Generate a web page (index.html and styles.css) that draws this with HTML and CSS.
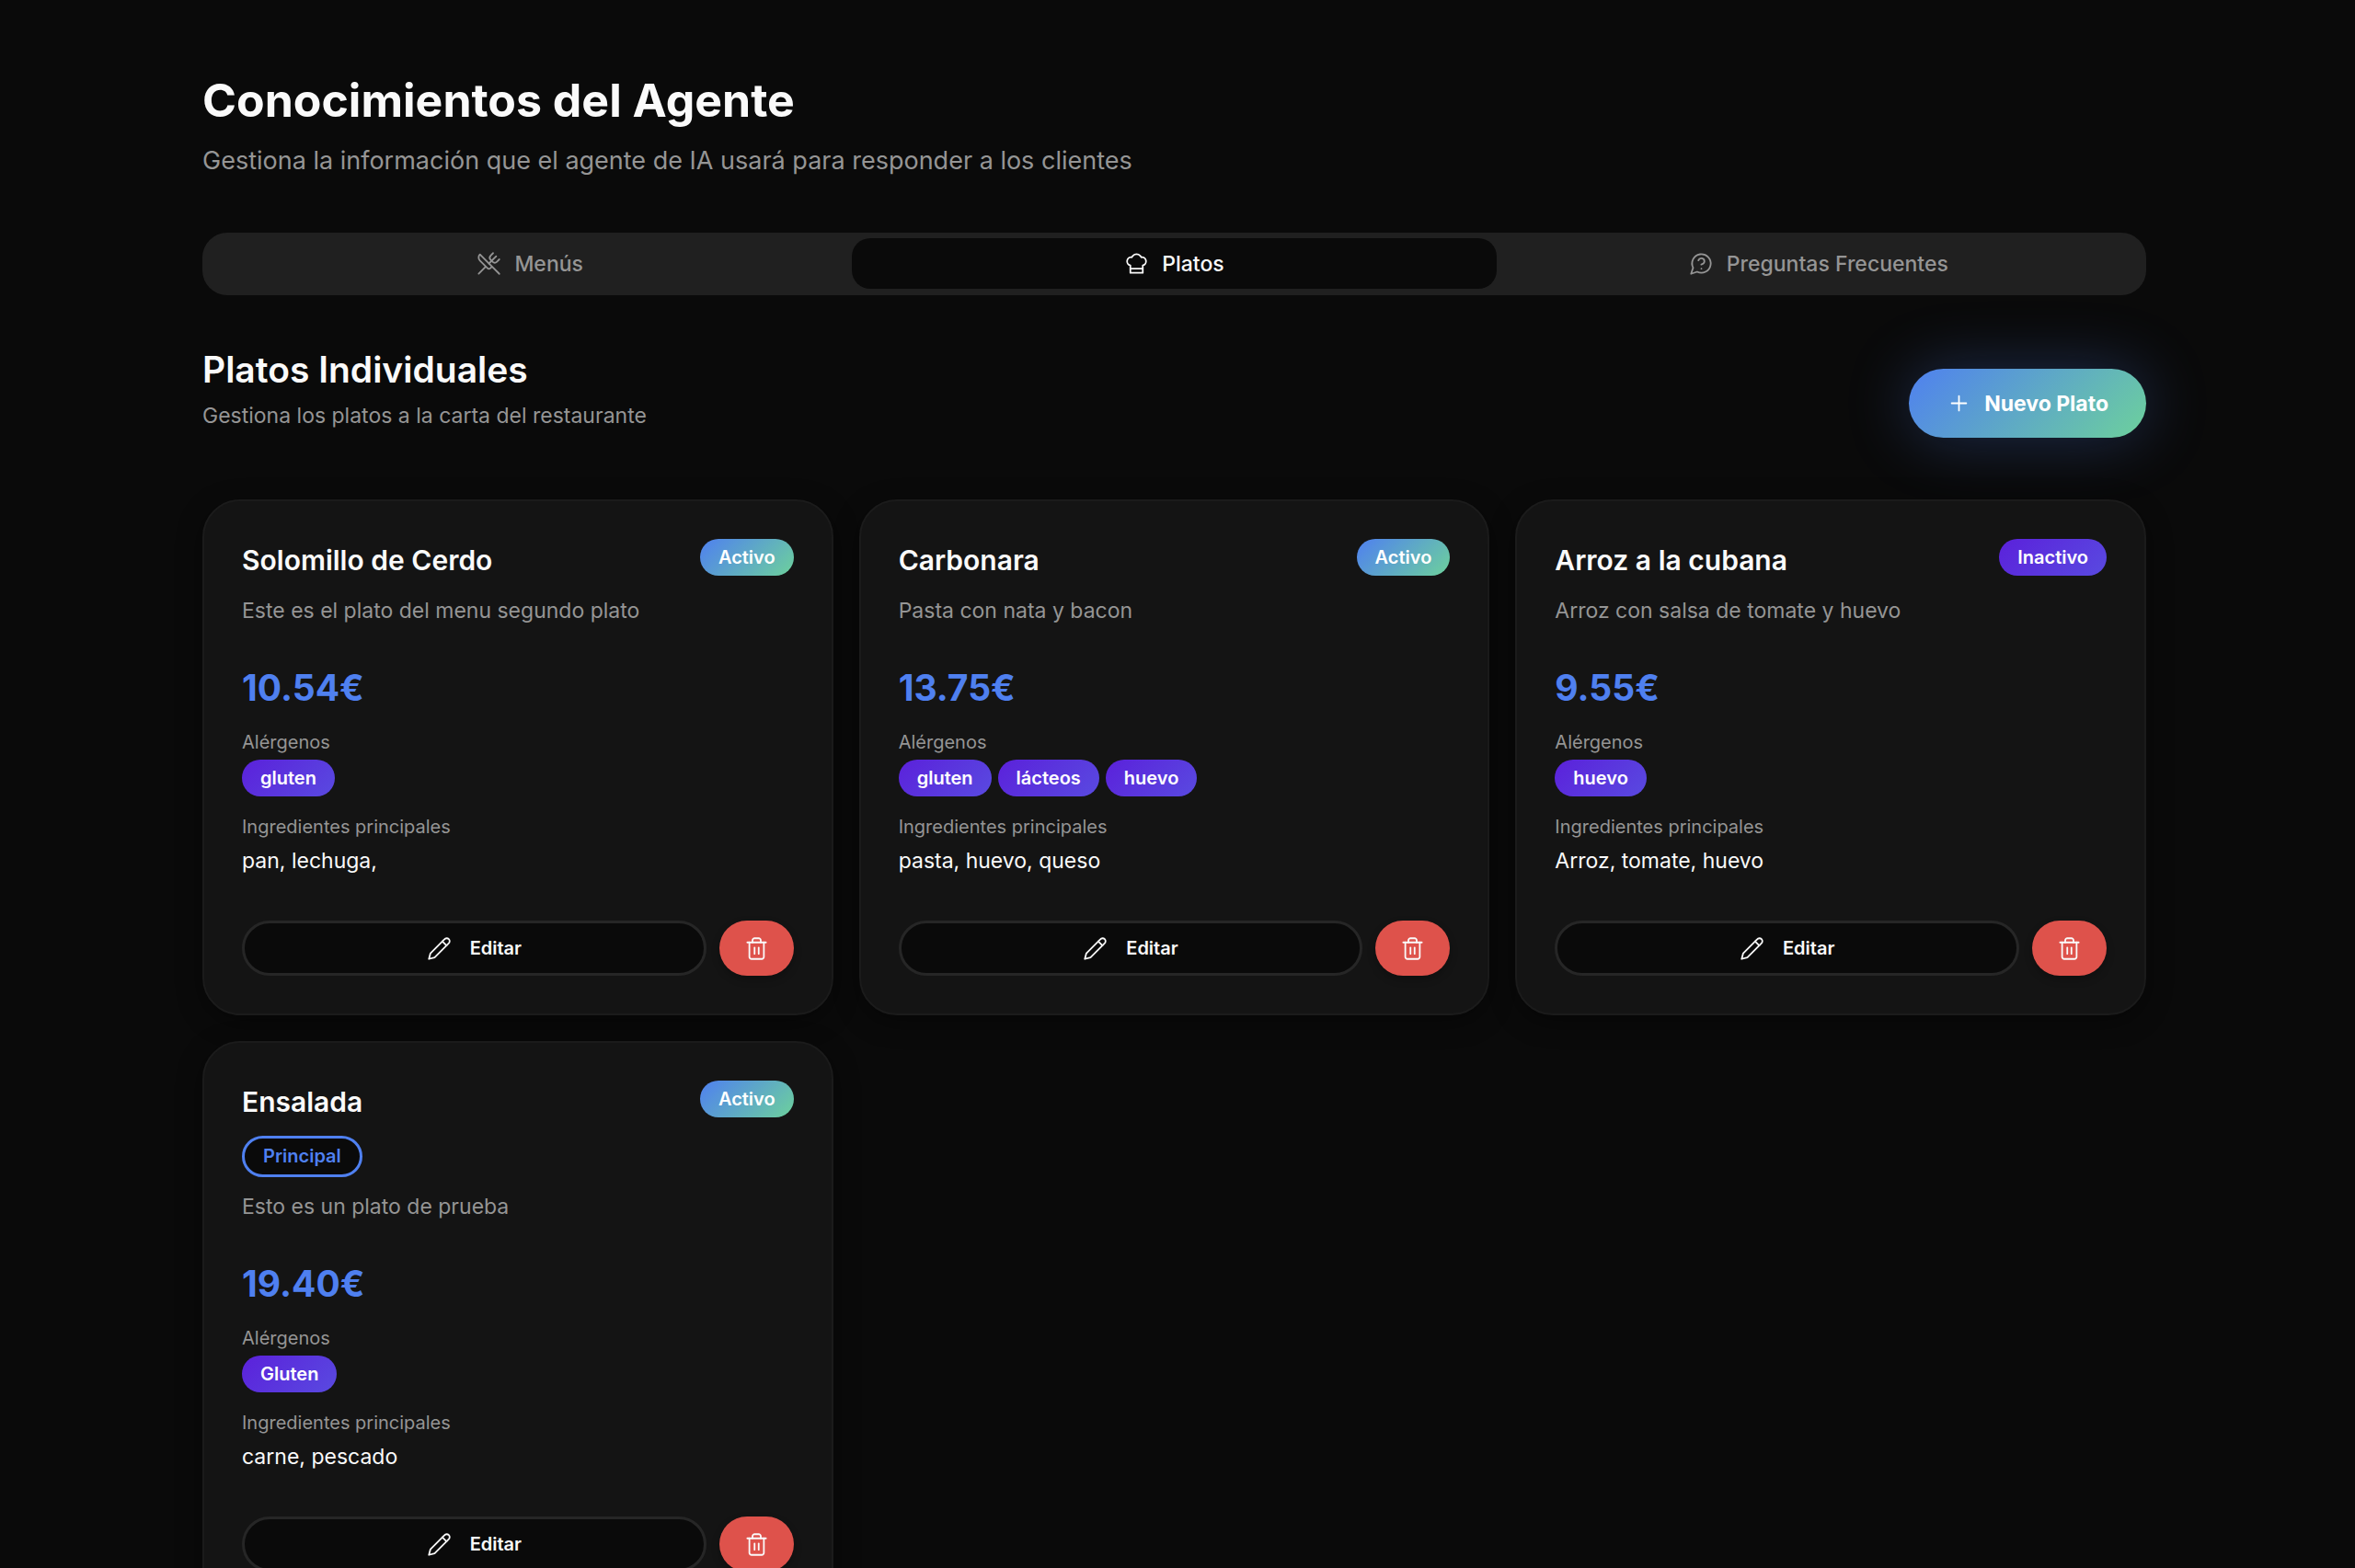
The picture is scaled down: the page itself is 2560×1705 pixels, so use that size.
FILE: index.html
```html
<!DOCTYPE html>
<html lang="es">
<head>
    <meta charset="UTF-8">
    <meta name="viewport" content="width=device-width, initial-scale=1.0">
    <title>Conocimientos del Agente</title>
    <link rel="stylesheet" href="styles.css">
</head>
<body>

    <!-- Iconos compartidos -->
    <svg class="icon-defs" aria-hidden="true">
        <symbol id="icon-utensils" viewBox="0 0 24 24">
            <path d="m16 2-2.3 2.3a3 3 0 0 0 0 4.2l1.8 1.8a3 3 0 0 0 4.2 0L22 8"/>
            <path d="M15 15 3.3 3.3a4.2 4.2 0 0 0 0 6l7.3 7.3c.7.7 2 .7 2.8 0L15 15Zm0 0 7 7"/>
            <path d="m2.1 21.8 6.4-6.3"/>
            <path d="m19 5-7 7"/>
        </symbol>
        <symbol id="icon-chef" viewBox="0 0 24 24">
            <path d="M6 13.87A4 4 0 0 1 7.41 6a5.11 5.11 0 0 1 1.05-1.54 5 5 0 0 1 7.08 0A5.11 5.11 0 0 1 16.59 6 4 4 0 0 1 18 13.87V21H6Z"/>
            <path d="M6 17h12"/>
        </symbol>
        <symbol id="icon-question" viewBox="0 0 24 24">
            <path d="M7.9 20A9 9 0 1 0 4 16.1L2 22Z"/>
            <path d="M9.09 9a3 3 0 0 1 5.83 1c0 2-3 3-3 3"/>
            <path d="M12 17h.01"/>
        </symbol>
        <symbol id="icon-plus" viewBox="0 0 24 24">
            <path d="M5 12h14"/>
            <path d="M12 5v14"/>
        </symbol>
        <symbol id="icon-pencil" viewBox="0 0 24 24">
            <path d="M17 3a2.85 2.83 0 1 1 4 4L7.5 20.5 2 22l1.5-5.5Z"/>
            <path d="m15 5 4 4"/>
        </symbol>
        <symbol id="icon-trash" viewBox="0 0 24 24">
            <path d="M3 6h18"/>
            <path d="M19 6v14c0 1-1 2-2 2H7c-1 0-2-1-2-2V6"/>
            <path d="M8 6V4c0-1 1-2 2-2h4c1 0 2 1 2 2v2"/>
            <path d="M10 11v6"/>
            <path d="M14 11v6"/>
        </symbol>
    </svg>

    <main class="page">
        <header class="page-header">
            <h1>Conocimientos del Agente</h1>
            <p>Gestiona la información que el agente de IA usará para responder a los clientes</p>
        </header>

        <div class="tabs" role="tablist">
            <button class="tab" role="tab" aria-selected="false">
                <svg class="icon"><use href="#icon-utensils"/></svg>
                Menús
            </button>
            <button class="tab active" role="tab" aria-selected="true">
                <svg class="icon"><use href="#icon-chef"/></svg>
                Platos
            </button>
            <button class="tab" role="tab" aria-selected="false">
                <svg class="icon"><use href="#icon-question"/></svg>
                Preguntas Frecuentes
            </button>
        </div>

        <section>
            <div class="section-header">
                <div>
                    <h2>Platos Individuales</h2>
                    <p>Gestiona los platos a la carta del restaurante</p>
                </div>
                <button class="new-button">
                    <svg class="icon"><use href="#icon-plus"/></svg>
                    Nuevo Plato
                </button>
            </div>

            <div class="cards">
                <article class="card">
                    <div class="card-header">
                        <div class="card-info">
                            <h3>Solomillo de Cerdo</h3>
                            <p class="description">Este es el plato del menu segundo plato</p>
                        </div>
                        <span class="badge badge-active">Activo</span>
                    </div>
                    <p class="price">10.54€</p>
                    <div class="detail">
                        <p class="detail-label">Alérgenos</p>
                        <div class="badges">
                            <span class="badge">gluten</span>
                        </div>
                    </div>
                    <div class="detail">
                        <p class="detail-label">Ingredientes principales</p>
                        <p class="ingredients">pan, lechuga,</p>
                    </div>
                    <div class="actions">
                        <button class="edit-button">
                            <svg class="icon"><use href="#icon-pencil"/></svg>
                            Editar
                        </button>
                        <button class="delete-button" aria-label="Eliminar">
                            <svg class="icon"><use href="#icon-trash"/></svg>
                        </button>
                    </div>
                </article>

                <article class="card">
                    <div class="card-header">
                        <div class="card-info">
                            <h3>Carbonara</h3>
                            <p class="description">Pasta con nata y bacon</p>
                        </div>
                        <span class="badge badge-active">Activo</span>
                    </div>
                    <p class="price">13.75€</p>
                    <div class="detail">
                        <p class="detail-label">Alérgenos</p>
                        <div class="badges">
                            <span class="badge">gluten</span>
                            <span class="badge">lácteos</span>
                            <span class="badge">huevo</span>
                        </div>
                    </div>
                    <div class="detail">
                        <p class="detail-label">Ingredientes principales</p>
                        <p class="ingredients">pasta, huevo, queso</p>
                    </div>
                    <div class="actions">
                        <button class="edit-button">
                            <svg class="icon"><use href="#icon-pencil"/></svg>
                            Editar
                        </button>
                        <button class="delete-button" aria-label="Eliminar">
                            <svg class="icon"><use href="#icon-trash"/></svg>
                        </button>
                    </div>
                </article>

                <article class="card">
                    <div class="card-header">
                        <div class="card-info">
                            <h3>Arroz a la cubana</h3>
                            <p class="description">Arroz con salsa de tomate y huevo</p>
                        </div>
                        <span class="badge">Inactivo</span>
                    </div>
                    <p class="price">9.55€</p>
                    <div class="detail">
                        <p class="detail-label">Alérgenos</p>
                        <div class="badges">
                            <span class="badge">huevo</span>
                        </div>
                    </div>
                    <div class="detail">
                        <p class="detail-label">Ingredientes principales</p>
                        <p class="ingredients">Arroz, tomate, huevo</p>
                    </div>
                    <div class="actions">
                        <button class="edit-button">
                            <svg class="icon"><use href="#icon-pencil"/></svg>
                            Editar
                        </button>
                        <button class="delete-button" aria-label="Eliminar">
                            <svg class="icon"><use href="#icon-trash"/></svg>
                        </button>
                    </div>
                </article>

                <article class="card">
                    <div class="card-header">
                        <div class="card-info">
                            <h3>Ensalada</h3>
                            <span class="badge badge-outline">Principal</span>
                            <p class="description">Esto es un plato de prueba</p>
                        </div>
                        <span class="badge badge-active">Activo</span>
                    </div>
                    <p class="price">19.40€</p>
                    <div class="detail">
                        <p class="detail-label">Alérgenos</p>
                        <div class="badges">
                            <span class="badge">Gluten</span>
                        </div>
                    </div>
                    <div class="detail">
                        <p class="detail-label">Ingredientes principales</p>
                        <p class="ingredients">carne, pescado</p>
                    </div>
                    <div class="actions">
                        <button class="edit-button">
                            <svg class="icon"><use href="#icon-pencil"/></svg>
                            Editar
                        </button>
                        <button class="delete-button" aria-label="Eliminar">
                            <svg class="icon"><use href="#icon-trash"/></svg>
                        </button>
                    </div>
                </article>
            </div>
        </section>
    </main>

</body>
</html>
```
FILE: styles.css
```css
* {
    box-sizing: border-box;
}

html {
    scrollbar-width: none;
}

body {
    margin: 0;
    background-color: #0a0a0a;
    color: #fafafa;
    font-family: Inter, sans-serif;
    font-size: 23px;
    line-height: 36px;
}

h1, h2, h3, p {
    margin: 0;
}

button {
    font-family: inherit;
    cursor: pointer;
}

.icon-defs {
    display: none;
}

.icon {
    width: 27px;
    height: 27px;
    flex-shrink: 0;
    fill: none;
    stroke: currentColor;
    stroke-width: 1.6;
    stroke-linecap: round;
    stroke-linejoin: round;
}

.page {
    padding: 78px 227px 78px 220px;
}

.page-header {
    margin-bottom: 57px;
}

.page-header h1 {
    font-size: 50px;
    line-height: 62px;
    font-weight: 700;
}

.page-header p {
    margin-top: 14px;
    font-size: 27px;
    line-height: 42px;
    color: #959595;
}

/* Pestañas */
.tabs {
    display: grid;
    grid-template-columns: repeat(3, 1fr);
    padding: 6px 6px 7px;
    height: 68px;
    background-color: #202020;
    border-radius: 27px;
}

.tab {
    display: flex;
    align-items: center;
    justify-content: center;
    gap: 14px;
    border: none;
    border-radius: 20px;
    background: none;
    color: #959595;
    font-size: 23px;
    font-weight: 500;
}

.tab.active {
    background-color: #0a0a0a;
    color: #fafafa;
}

.section-header {
    display: flex;
    justify-content: space-between;
    align-items: flex-end;
    margin: 55px 0 67px;
}

.section-header h2 {
    font-size: 39px;
    line-height: 52px;
    font-weight: 600;
}

.section-header p {
    line-height: 48px;
    color: #959595;
}

.new-button {
    display: flex;
    align-items: center;
    gap: 14px;
    height: 75px;
    padding: 0 41px;
    border: none;
    border-radius: 38px;
    background: linear-gradient(135deg, #4f80f0, #6dd19c);
    box-shadow: 0 0 70px rgba(79, 128, 240, 0.3);
    color: #fff;
    font-size: 23px;
    font-weight: 700;
}

/* Tarjetas */
.cards {
    display: grid;
    grid-template-columns: repeat(3, 1fr);
    gap: 28px;
}

.card {
    padding: 41px;
    border: 2px solid #1b1b1b;
    border-radius: 41px;
    background-color: #141414;
    box-shadow: 0 7px 28px rgba(0, 0, 0, 0.4);
}

.card-header {
    display: flex;
    justify-content: space-between;
    align-items: flex-start;
    margin-bottom: 40px;
}

.card-info {
    display: flex;
    flex-direction: column;
    align-items: flex-start;
    gap: 14px;
}

.card-info h3 {
    font-size: 30px;
    line-height: 46px;
    font-weight: 600;
}

.description {
    color: #959595;
}

.badge {
    height: 40px;
    padding: 0 20px;
    border-radius: 20px;
    background: linear-gradient(135deg, #5b21db, #594ae0);
    color: #fff;
    font-size: 20px;
    line-height: 40px;
    font-weight: 600;
}

.badge-active {
    background: linear-gradient(135deg, #4f80f0, #6dd19c);
}

.badge-outline {
    height: 45px;
    border: 3px solid #4f80f0;
    border-radius: 23px;
    background: #0a0a0a;
    color: #4f80f0;
    line-height: 39px;
}

.badges {
    display: flex;
    flex-wrap: wrap;
    gap: 7px;
}

.price {
    color: #4f80f0;
    font-size: 39px;
    line-height: 52px;
    font-weight: 700;
}

.detail {
    margin-top: 19px;
}

.detail-label {
    margin-bottom: 5px;
    color: #959595;
    font-size: 20px;
    line-height: 28px;
}

.actions {
    display: flex;
    gap: 14px;
    margin-top: 47px;
}

.edit-button,
.delete-button {
    display: flex;
    align-items: center;
    justify-content: center;
    height: 60px;
    border-radius: 30px;
    color: #fafafa;
}

.edit-button {
    flex: 1;
    gap: 20px;
    border: 3px solid #262626;
    background-color: #0a0a0a;
    font-size: 20px;
    font-weight: 600;
}

.delete-button {
    width: 81px;
    border: none;
    background-color: #de524b;
    box-shadow: 0 4px 8px rgba(0, 0, 0, 0.25);
}
```
